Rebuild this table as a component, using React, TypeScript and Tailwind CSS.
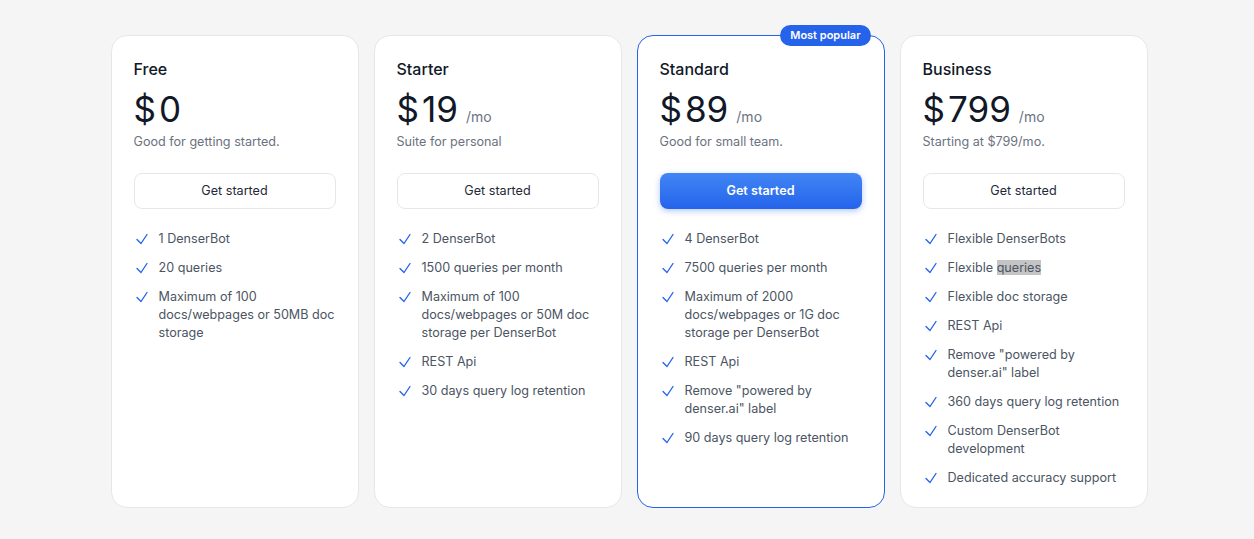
import React from "react";

type Plan = {
  name: string;
  price: string;
  mo: boolean;
  desc: string;
  features: React.ReactNode[];
  popular?: boolean;
};

const plans: Plan[] = [
  {
    name: "Free",
    price: "0",
    mo: false,
    desc: "Good for getting started.",
    features: ["1 DenserBot", "20 queries", "Maximum of 100 docs/webpages or 50MB doc storage"],
  },
  {
    name: "Starter",
    price: "19",
    mo: true,
    desc: "Suite for personal",
    features: [
      "2 DenserBot",
      "1500 queries per month",
      "Maximum of 100 docs/webpages or 50M doc storage per DenserBot",
      "REST Api",
      "30 days query log retention",
    ],
  },
  {
    name: "Standard",
    price: "89",
    mo: true,
    desc: "Good for small team.",
    popular: true,
    features: [
      "4 DenserBot",
      "7500 queries per month",
      "Maximum of 2000 docs/webpages or 1G doc storage per DenserBot",
      "REST Api",
      'Remove "powered by denser.ai" label',
      "90 days query log retention",
    ],
  },
  {
    name: "Business",
    price: "799",
    mo: true,
    desc: "Starting at $799/mo.",
    features: [
      "Flexible DenserBots",
      <>
        Flexible <span className="bg-[#c4c4c4]">queries</span>
      </>,
      "Flexible doc storage",
      "REST Api",
      'Remove "powered by denser.ai" label',
      "360 days query log retention",
      "Custom DenserBot development",
      "Dedicated accuracy support",
    ],
  },
];

function CheckIcon() {
  return (
    <svg
      viewBox="0 0 24 24"
      className="w-4 h-4 shrink-0 mt-[1px] text-[#2563eb]"
      fill="none"
      stroke="currentColor"
      strokeWidth={2}
      strokeLinecap="round"
      strokeLinejoin="round"
    >
      <path d="M4.5 12.75l6 6 9-13.5" />
    </svg>
  );
}

function Card({ plan }: { plan: Plan }) {
  return (
    <div
      className={
        "relative bg-white rounded-2xl border px-[22px] pt-[21px] pb-[20px] flex flex-col " +
        (plan.popular ? "border-[#2563eb]" : "border-[#e5e7eb]")
      }
    >
      {plan.popular && (
        <div className="absolute -top-[11px] right-[13px] h-[21px] px-[10px] rounded-full bg-[#2563eb] text-white text-[11px] font-semibold flex items-center leading-none">
          Most popular
        </div>
      )}
      <div className="text-base leading-6 font-medium text-[#111827]">{plan.name}</div>
      <div className="mt-2 flex items-baseline h-10 leading-10">
        <span className="text-[35px] text-[#111827]">$</span>
        <span className="text-[35px] text-[#111827] ml-[3px]">{plan.price}</span>
        {plan.mo && <span className="ml-[8px] text-[14px] text-[#6b7280]">/mo</span>}
      </div>
      <div className="mt-[3px] text-[12.6px] leading-5 text-[#6b7280]">{plan.desc}</div>
      <button
        className={
          "mt-[21px] h-9 w-full rounded-lg text-[12.6px] " +
          (plan.popular
            ? "bg-gradient-to-b from-[#4285f4] to-[#2563eb] text-white font-semibold shadow-[0_2px_6px_rgba(37,99,235,0.35)]"
            : "border border-[#e5e7eb] bg-white text-[#1f2937]")
        }
      >
        Get started
      </button>
      <ul className="mt-[21px] flex flex-col gap-[11px]">
        {plan.features.map((f, i) => (
          <li key={i} className="flex items-start gap-[9px] text-[12.6px] leading-[18px] text-[#4b5563]">
            <CheckIcon />
            <span>{f}</span>
          </li>
        ))}
      </ul>
    </div>
  );
}

export default function App() {
  return (
    <div
      className="min-h-[539px] bg-[#f5f5f5] pt-[35px] pl-[4px]"
      style={{ fontFamily: "Inter, 'Noto Sans', sans-serif" }}
    >
      <div className="mx-auto w-[1037px] grid grid-cols-4 gap-[15px] items-stretch">
        {plans.map((p) => (
          <Card key={p.name} plan={p} />
        ))}
      </div>
    </div>
  );
}
